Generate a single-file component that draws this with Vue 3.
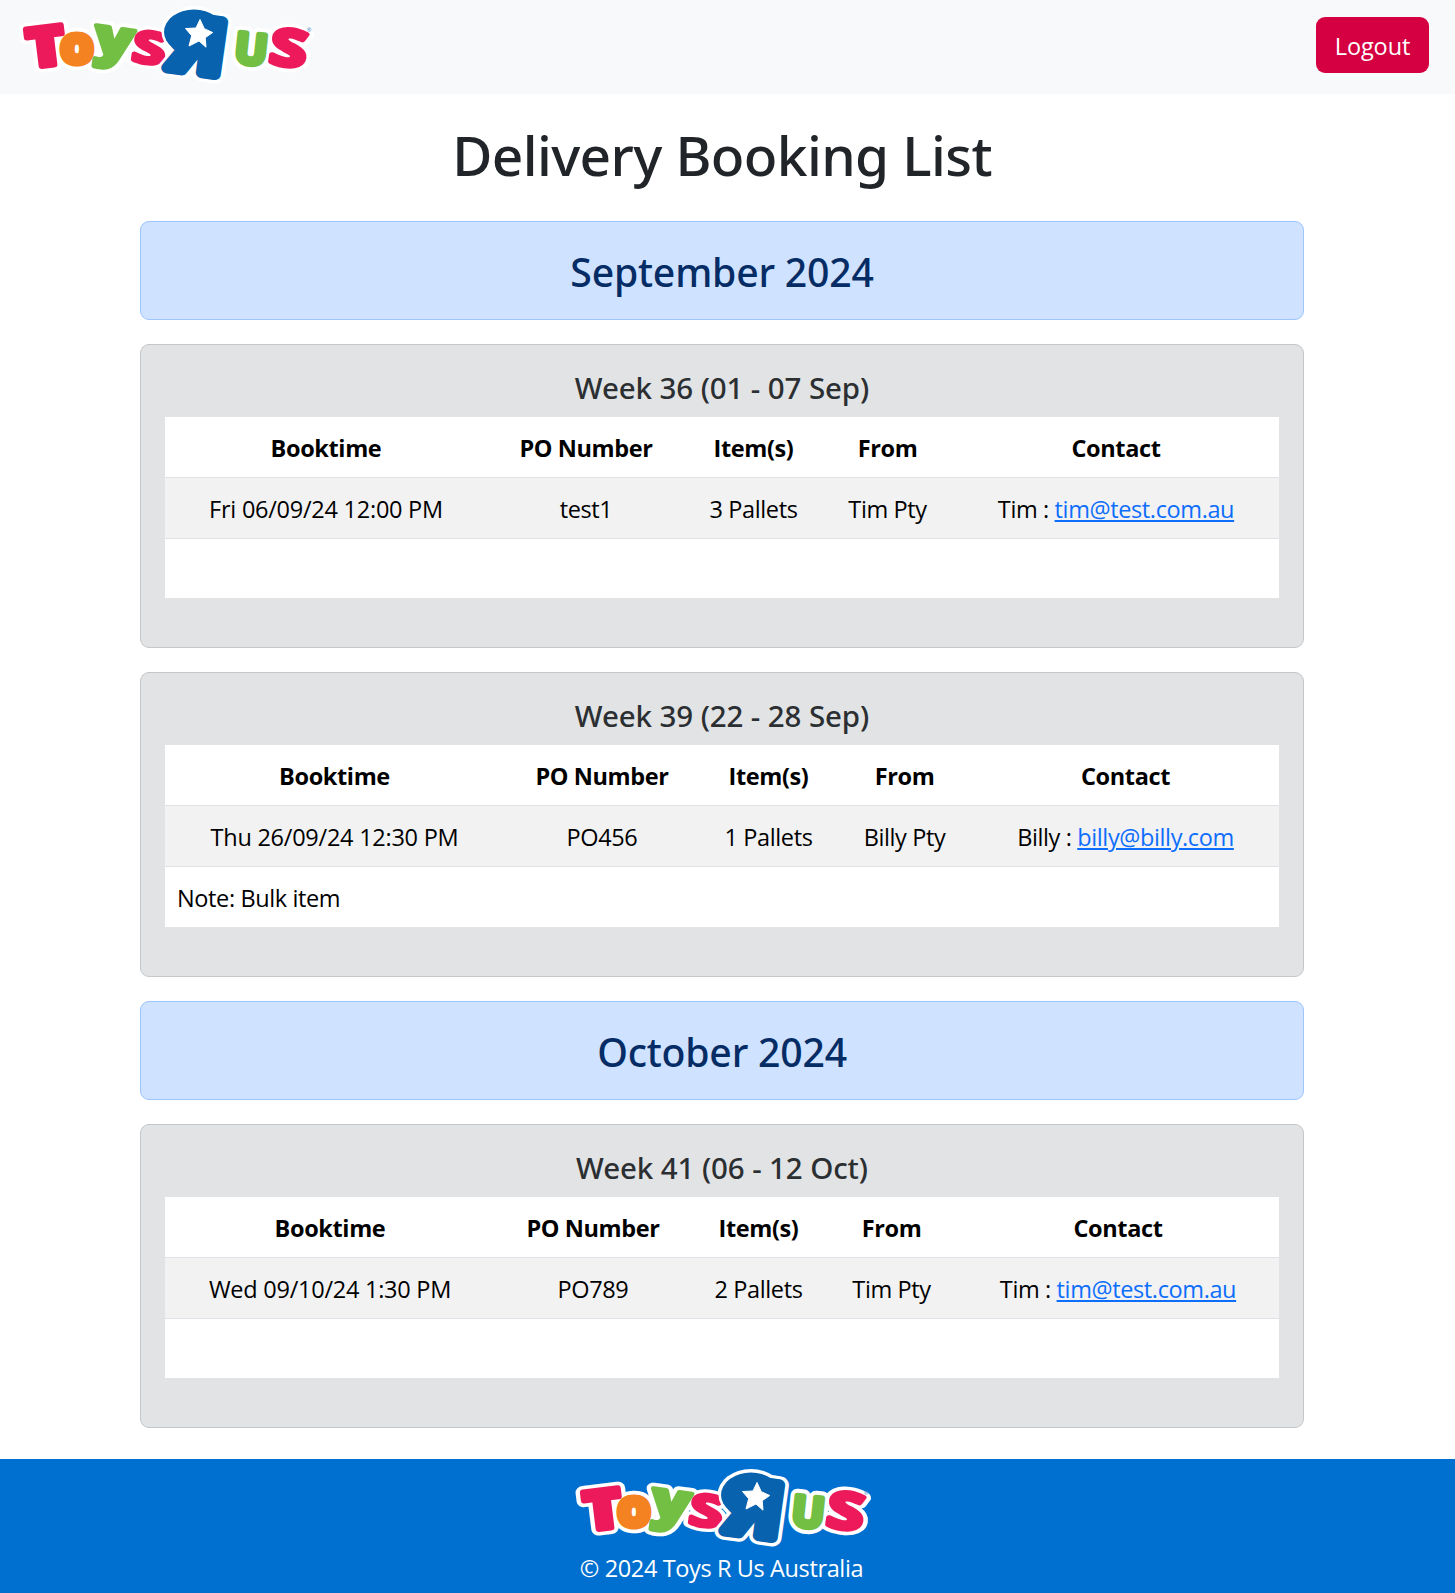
<script setup>
import { h } from 'vue'

const months = [
  {
    name: 'September 2024',
    weeks: [
      {
        title: 'Week 36 (01 - 07 Sep)',
        cols: [322, 198, 137, 131, 326],
        rows: [{ time: 'Fri 06/09/24 12:00 PM', po: 'test1', items: '3 Pallets', from: 'Tim Pty', name: 'Tim', mail: 'tim@test.com.au', note: '' }]
      },
      {
        title: 'Week 39 (22 - 28 Sep)',
        cols: [339, 196, 137, 135, 307],
        rows: [{ time: 'Thu 26/09/24 12:30 PM', po: 'PO456', items: '1 Pallets', from: 'Billy Pty', name: 'Billy', mail: 'billy@billy.com', note: 'Note: Bulk item' }]
      }
    ]
  },
  {
    name: 'October 2024',
    weeks: [
      {
        title: 'Week 41 (06 - 12 Oct)',
        cols: [330, 196, 135, 131, 322],
        rows: [{ time: 'Wed 09/10/24 1:30 PM', po: 'PO789', items: '2 Pallets', from: 'Tim Pty', name: 'Tim', mail: 'tim@test.com.au', note: '' }]
      }
    ]
  }
]

const headings = ['Booktime', 'PO Number', 'Item(s)', 'From', 'Contact']

const pink = '#ed1a5b'
const green = '#72bf44'
const letters = [
  { ch: 'T', fill: pink, w: 6, bold: 800, at: 'translate(47.8 65.5) rotate(-7) scale(1.28 1.08)' },
  { ch: 'O', fill: '#f58220', w: 7, bold: 800, at: 'translate(76.7 63) scale(.8 .77)' },
  { ch: 'y', fill: green, w: 5, bold: 800, at: 'translate(111.5 56.5) rotate(8) scale(1.26 1.03)' },
  { ch: 'S', fill: pink, w: 5, bold: 700, at: 'translate(147 63) rotate(8) scale(1.2 .87)' },
  { ch: 'U', fill: green, w: 5.5, bold: 700, at: 'translate(249.5 64) rotate(6) scale(.86 .85)' },
  { ch: 'S', fill: pink, w: 6, bold: 700, at: 'translate(286 65.5) rotate(8) scale(1.32 1.0)' }
]
const blue = '#0862ae'
const big = { ch: 'R', fill: blue, w: 12, bold: 700, font: 'Inter', at: 'translate(193 71.5) rotate(8) scale(-1.66 1.46)' }

const glyph = (l, color, extra) =>
  h('text', {
    transform: l.at,
    fill: color,
    stroke: color,
    'stroke-width': l.w + extra,
    'stroke-linejoin': 'round',
    'vector-effect': 'non-scaling-stroke',
    'text-anchor': 'middle',
    'font-family': `"${l.font || 'Open Sans'}", sans-serif`,
    'font-weight': l.bold,
    'font-size': 50
  }, l.ch)

const bowl = (color, grow) =>
  h('ellipse', { cx: 194, cy: 32, rx: 30 + grow, ry: 22.5 + grow, fill: color })

const BrandLogo = () =>
  h('svg', { width: 330, height: 92, viewBox: '0 0 330 92', role: 'img', 'aria-label': 'Toys R Us' }, [
    ...letters.map((l) => glyph(l, '#fff', 8)),
    glyph(big, '#fff', 7),
    bowl('#fff', 3.5),
    ...letters.map((l) => glyph(l, l.fill, 0)),
    glyph(big, '#fff', 5),
    bowl('#fff', 2.5),
    glyph(big, blue, 0),
    bowl(blue, 0),
    h('polygon', {
      points: '200,19.5 204.3,28.7 212.7,32.5 205.2,37.7 206,47.2 199,41 189,46 191.7,35.7 185.5,28.5 196,28',
      fill: '#fff', stroke: '#fff', 'stroke-width': 1, 'stroke-linejoin': 'round'
    }),
    h('text', { x: 306.5, y: 32, fill: '#4d90c8', 'font-family': '"Open Sans", sans-serif', 'font-size': 6 }, '®')
  ])
</script>

<template>
  <div class="page">
    <header class="navbar">
      <a class="brand"><BrandLogo /></a>
      <button class="logout" type="button">Logout</button>
    </header>

    <main class="content">
      <h1>Delivery Booking List</h1>
      <template v-for="month in months" :key="month.name">
        <div class="alert month"><h2>{{ month.name }}</h2></div>
        <section v-for="week in month.weeks" :key="week.title" class="alert week">
          <h5>{{ week.title }}</h5>
          <table>
            <colgroup>
              <col v-for="(w, i) in week.cols" :key="i" :style="{ width: w + 'px' }" />
            </colgroup>
            <thead>
              <tr><th v-for="t in headings" :key="t">{{ t }}</th></tr>
            </thead>
            <tbody>
              <template v-for="row in week.rows" :key="row.po">
                <tr class="booking">
                  <td class="time">{{ row.time }}</td>
                  <td>{{ row.po }}</td>
                  <td>{{ row.items }}</td>
                  <td>{{ row.from }}</td>
                  <td>{{ row.name }} : <a href="#">{{ row.mail }}</a></td>
                </tr>
                <tr class="note" :class="{ empty: !row.note }">
                  <td colspan="5">{{ row.note }}</td>
                </tr>
              </template>
            </tbody>
          </table>
        </section>
      </template>
    </main>

    <footer class="footer">
      <BrandLogo />
      <p>© 2024 Toys R Us Australia</p>
    </footer>
  </div>
</template>

<style>
body {
  background: #fff;
}
</style>

<style scoped>
.page {
  box-sizing: border-box;
  height: 1593px;
  display: flex;
  flex-direction: column;
  font: 23.5px/36px "Segoe UI", "Open Sans", "Noto Sans", sans-serif;
  letter-spacing: -0.38px;
  color: #212529;
}
.navbar {
  box-sizing: border-box;
  height: 94px;
  flex: none;
  padding-right: 26px;
  display: flex;
  justify-content: space-between;
  align-items: flex-start;
  background: #f8f9fa;
}
.brand {
  display: flex;
}
.logout {
  box-sizing: border-box;
  width: 113px;
  height: 56px;
  margin-top: 17px;
  padding: 2px 0 0;
  border: 0;
  border-radius: 9px;
  background: #d50042;
  color: #fff;
  font: inherit;
  letter-spacing: -0.1px;
}
.content {
  width: 1164px;
  margin-left: 140px;
  flex: 1;
}
h1, h2, h5 {
  margin: 0;
  font-family: "Segoe UI", "Noto Sans", sans-serif;
  font-weight: 500;
  text-align: center;
}
h1 {
  margin: 27px 0 33px;
  font-size: 55px;
  line-height: 67px;
  letter-spacing: -0.6px;
}
h2 {
  font-size: 39.2px;
  line-height: 52px;
  letter-spacing: -0.2px;
}
h5 {
  margin: 1px 0 11px;
  font-size: 29.5px;
  line-height: 36px;
  letter-spacing: -0.1px;
}
.alert {
  box-sizing: border-box;
  margin-bottom: 24px;
  padding: 24px;
  border: 1px solid;
  border-radius: 9px;
}
.month {
  height: 99px;
  background: #cfe2ff;
  border-color: #9ec5fe;
  color: #052c65;
}
.week {
  background: #e2e3e5;
  border-color: #c4c8cb;
  color: #2b2f32;
}
table {
  width: calc(100% - 1px);
  margin-bottom: 25px;
  table-layout: fixed;
  border-collapse: separate;
  border-spacing: 0;
  background: #fff;
  color: #000;
}
th, td {
  padding: 13px 12px 11px;
  border-bottom: 1px solid #dee2e6;
  text-align: center;
  white-space: nowrap;
}
th {
  font-weight: 700;
}
.booking td {
  background: #f2f2f2;
}
.booking .time {
  letter-spacing: -0.25px;
}
.note td {
  border-bottom: 0;
  text-align: left;
}
.note.empty td {
  height: 35px;
}
a {
  color: #0d6efd;
}
.footer {
  height: 134px;
  padding-right: 12px;
  flex: none;
  display: flex;
  flex-direction: column;
  align-items: center;
  background: #0070d0;
  color: #fff;
}
.footer svg {
  margin-top: 4px;
}
.footer p {
  margin: -5px 0 0;
}
</style>
